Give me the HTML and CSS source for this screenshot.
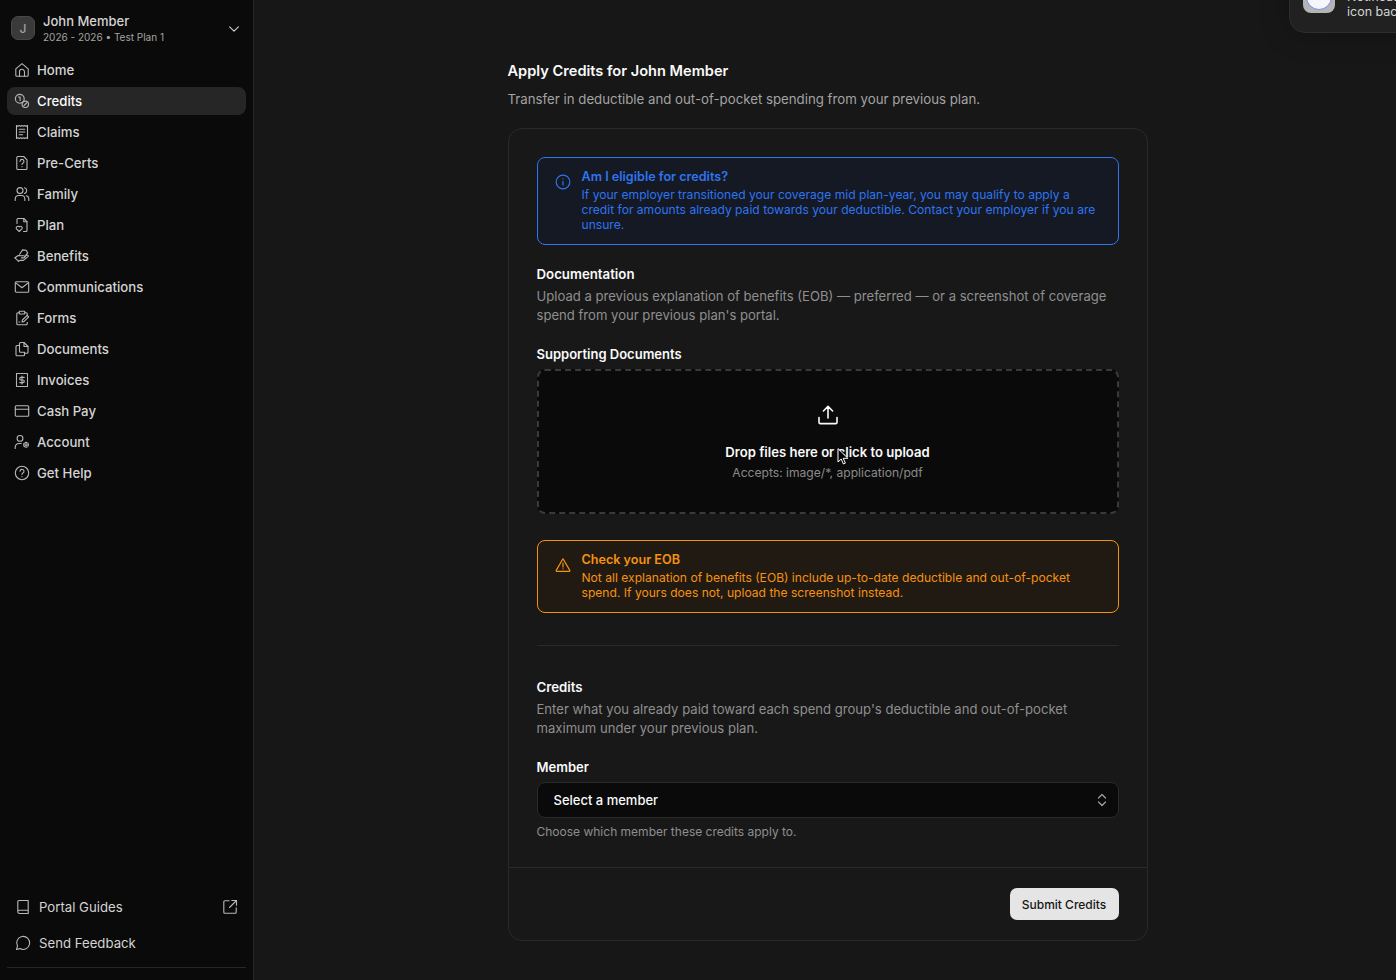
FILE: index.html
```html
<!DOCTYPE html>
<html lang="en">

<head>
    <meta charset="UTF-8">
    <meta name="viewport" content="width=device-width, initial-scale=1.0">
    <link rel="stylesheet" href="styles.css">
    <title>Apply Credits</title>
</head>

<body>
    <aside class="sidebar">
        <div class="member">
            <div class="avatar">J</div>
            <div class="memberText">
                <div class="memberName">John Member</div>
                <div class="memberPlan">2026 - 2026 • Test Plan 1</div>
            </div>
            <svg class="chev" viewBox="0 0 16 16"><path d="M3 5.500l5 5 5-5"/></svg>
        </div>

        <nav class="nav">
            <a class="navItem"><svg viewBox="0 0 16 16"><path d="M1.800 6.800L8 1.700l6.200 5.100v6.400a1 1 0 0 1-1 1H2.800a1 1 0 0 1-1-1z"/><path d="M5.500 14.200V9.800a2.500 2.500 0 0 1 5 0v4.400"/></svg>Home</a>
            <a class="navItem active"><svg viewBox="0 0 16 16"><circle cx="5.800" cy="5.800" r="4.400"/><circle cx="11.300" cy="11.300" r="3.200"/><path d="M4.600 4h1.500v3.400M10 12.600l2.600-2.600"/></svg>Credits</a>
            <a class="navItem"><svg viewBox="0 0 16 16"><path d="M2.500 1.500l1.400.8 1.400-.8 1.300.8 1.400-.8 1.400.8 1.300-.8 1.400.8 1.400-.8v13l-1.400-.8-1.400.8-1.300-.8-1.400.8-1.400-.8-1.300.8-1.400-.8-1.400.8z"/><path d="M5.200 5.200h5.600M5.200 8h5.600M5.200 10.800h3.400"/></svg>Claims</a>
            <a class="navItem"><svg viewBox="0 0 16 16"><path d="M3.800 1.500h5.900l3.300 3.300v8.700a1 1 0 0 1-1 1H3.800a1 1 0 0 1-1-1v-11a1 1 0 0 1 1-1z"/><path d="M6 6.400a2 2 0 1 1 2.800 1.800c-.5.300-.8.600-.8 1.200M8 11.600v.1"/></svg>Pre-Certs</a>
            <a class="navItem"><svg viewBox="0 0 16 16"><circle cx="6" cy="4.600" r="3"/><path d="M1.200 14.500v-1.700a3.300 3.300 0 0 1 3.300-3.300h3a3.300 3.300 0 0 1 3.300 3.300v1.700"/><path d="M10.500 1.700a3 3 0 0 1 0 5.800M12.300 9.700a3.300 3.300 0 0 1 2.500 3.100v1.700"/></svg>Family</a>
            <a class="navItem"><svg viewBox="0 0 16 16"><path d="M3 6.500V2.500a1 1 0 0 1 1-1h5.800l3.200 3.200v8.800a1 1 0 0 1-1 1H9.500"/><path d="M9.800 1.500v3.200H13"/><path d="M5.200 14.500l-2.700-2.600a1.600 1.600 0 0 1 2.700-1.900 1.600 1.600 0 0 1 2.700 1.900z"/></svg>Plan</a>
            <a class="navItem"><svg viewBox="0 0 16 16"><path d="M1 9.800l3.200-2.300 3.600.2h2.100a1 1 0 0 1 0 2.200H7.400"/><path d="M4.400 13.200l1.400-.8h3.600l4.600-3.800a1 1 0 0 0-1.400-1.400l-2.200 1.700"/><path d="M1 9.800l3.400 3.400"/><path d="M5.600 6.300l3-4.400 3.600.3 1.500 2.700-1.800 2.300"/></svg>Benefits</a>
            <a class="navItem"><svg viewBox="0 0 16 16"><rect x="1.300" y="2.800" width="13.400" height="10.400" rx="1"/><path d="M1.500 3.600L8 8.800l6.500-5.200"/></svg>Communications</a>
            <a class="navItem"><svg viewBox="0 0 16 16"><path d="M10.800 2.800h1.400a1 1 0 0 1 1 1v1.400M5.200 2.800H3.800a1 1 0 0 0-1 1v10a1 1 0 0 0 1 1h8.400a1 1 0 0 0 1-1v-1.500"/><rect x="5.200" y="1.200" width="5.600" height="2.800" rx=".6"/><path d="M8 12l.4-2 4.800-4.600 1.500 1.500-4.800 4.700zM5 12h.8"/></svg>Forms</a>
            <a class="navItem"><svg viewBox="0 0 16 16"><path d="M5.500 4.500V2.500a1 1 0 0 1 1-1H10l4 4v5.800a1 1 0 0 1-1 1h-2.500"/><path d="M10 1.500v4h4"/><path d="M5.500 4.500H3a1 1 0 0 0-1 1v8.200a1 1 0 0 0 1 1h6.500a1 1 0 0 0 1-1v-2.400h-4a1 1 0 0 1-1-1z"/></svg>Documents</a>
            <a class="navItem"><svg viewBox="0 0 16 16"><path d="M2.500 1.500h11v13h-11z" stroke-dasharray="1.600 .7"/><path d="M10.200 5.400H7a1.300 1.300 0 0 0 0 2.600h2a1.300 1.300 0 0 1 0 2.600H5.800M8 4v8"/></svg>Invoices</a>
            <a class="navItem"><svg viewBox="0 0 16 16"><rect x="1.300" y="2.800" width="13.400" height="10.400" rx="1"/><path d="M1.300 6.200h13.400"/></svg>Cash Pay</a>
            <a class="navItem"><svg viewBox="0 0 16 16"><circle cx="6" cy="4.400" r="2.900"/><path d="M1.200 14.500v-1.500a3.500 3.500 0 0 1 3.500-3.500h2.500"/><circle cx="12" cy="10.800" r="1.100"/><circle cx="12" cy="10.800" r="2.400" stroke-dasharray="1.400 1"/></svg>Account</a>
            <a class="navItem"><svg viewBox="0 0 16 16"><circle cx="8" cy="8" r="6.700"/><path d="M6 6.300a2 2 0 1 1 2.900 1.800c-.6.300-.9.700-.9 1.300M8 11.600v.1"/></svg>Get Help</a>
        </nav>

        <div class="sideFoot">
            <a class="footItem"><svg viewBox="0 0 16 16"><path d="M2.800 12.800V2.500a1 1 0 0 1 1-1h9.400v13H4.400a1.600 1.600 0 0 1-1.600-1.700 1.600 1.600 0 0 1 1.600-1.600h8.800"/></svg>Portal Guides<svg class="extIcon" viewBox="0 0 16 16"><path d="M14.200 8.800v4.400a1 1 0 0 1-1 1H2.800a1 1 0 0 1-1-1V2.800a1 1 0 0 1 1-1h4.400M9.800 1.500h4.700v4.700M14.500 1.500L7.500 8.500"/></svg></a>
            <a class="footItem"><svg viewBox="0 0 16 16"><path d="M1.500 14.500l1-3.400a6.500 6.500 0 1 1 2.500 2.500z"/></svg>Send Feedback</a>
            <div class="footLine"></div>
        </div>
    </aside>

    <main class="main">
        <div class="content">
            <h1 class="pageTitle">Apply Credits for John Member</h1>
            <p class="pageSub">Transfer in deductible and out-of-pocket spending from your previous plan.</p>

            <section class="card">
                <div class="cardBody">
                    <div class="alert alertBlue">
                        <svg class="alertIcon" viewBox="0 0 16 16"><circle cx="8" cy="8" r="6.800"/><path d="M8 7.400V11M8 4.800v.1"/></svg>
                        <div>
                            <div class="alertTitle">Am I eligible for credits?</div>
                            <div class="alertText">If your employer transitioned your coverage mid plan-year, you may qualify to apply a credit for amounts already paid towards your deductible. Contact your employer if you are unsure.</div>
                        </div>
                    </div>

                    <h2 class="secTitle docTitle">Documentation</h2>
                    <p class="secText">Upload a previous explanation of benefits (EOB) — preferred — or a screenshot of coverage spend from your previous plan's portal.</p>

                    <div class="fieldLabel supLabel">Supporting Documents</div>
                    <div class="dropzone">
                        <svg class="upIcon" viewBox="0 0 20 20"><path d="M10 13V1.600M5.400 6L10 1.400 14.600 6M1 12.500v4.700a1.400 1.400 0 0 0 1.400 1.400h15.200a1.400 1.400 0 0 0 1.400-1.400v-4.700"/></svg>
                        <div class="dropTitle">Drop files here or click to upload</div>
                        <div class="dropSub">Accepts: image/*, application/pdf</div>
                        <svg class="cursor" viewBox="0 0 12 18"><path d="M1 1v13l3.200-3 2.200 5 2-.9-2.200-4.800H10.500z"/></svg>
                    </div>

                    <div class="alert alertOrange">
                        <svg class="alertIcon" viewBox="0 0 16 16"><path d="M8 1.800l6.800 11.600a.6.6 0 0 1-.5.9H1.700a.6.6 0 0 1-.5-.9z"/><path d="M8 6v4M8 11.800v.1"/></svg>
                        <div>
                            <div class="alertTitle">Check your EOB</div>
                            <div class="alertText">Not all explanation of benefits (EOB) include up-to-date deductible and out-of-pocket spend. If yours does not, upload the screenshot instead.</div>
                        </div>
                    </div>

                    <hr class="divider">

                    <h2 class="secTitle">Credits</h2>
                    <p class="secText">Enter what you already paid toward each spend group's deductible and out-of-pocket maximum under your previous plan.</p>

                    <div class="fieldLabel memLabel">Member</div>
                    <div class="select">
                        <span>Select a member</span>
                        <svg viewBox="0 0 12 16"><path d="M2.500 6L6 2.500 9.500 6M2.500 10L6 13.500 9.500 10"/></svg>
                    </div>
                    <p class="helpText">Choose which member these credits apply to.</p>
                </div>
                <div class="cardFoot">
                    <button class="submitB">Submit Credits</button>
                </div>
            </section>
        </div>
    </main>

    <!-- notification toast, cut off by the window edge -->
    <div class="toast">
        <div class="toastIcon"><div class="toastDisc"></div></div>
        <div class="toastText">Notifications<br>icon back</div>
    </div>
</body>

</html>
```

FILE: styles.css
```css
* {
    box-sizing: border-box;
}

html,
body {
    height: 100%;
}

body {
    margin: 0;
    display: flex;
    height: 980px;
    overflow: hidden;
    background-color: #171717;
    color: #fafafa;
    font-family: Inter, "Noto Sans", sans-serif;
}

svg {
    fill: none;
    stroke: currentColor;
    stroke-width: 1.2;
    stroke-linecap: round;
    stroke-linejoin: round;
}

/* sidebar */

.sidebar {
    width: 254px;
    flex-shrink: 0;
    display: flex;
    flex-direction: column;
    padding: 0 7px 12px;
    background-color: #0a0a0a;
    border-right: 1px solid #262626;
}

.member {
    display: flex;
    align-items: center;
    height: 54px;
    margin-top: 2px;
    padding: 0 4px;
}

.avatar {
    width: 24px;
    height: 24px;
    display: flex;
    align-items: center;
    justify-content: center;
    margin-right: 8px;
    margin-top: -2px;
    border: 1px solid #484848;
    border-radius: 7px;
    background-color: #3a3a3a;
    color: #a3a3a3;
    font-size: 12px;
    font-weight: 500;
}

.memberText {
    flex: 1;
}

.memberName {
    font-size: 13px;
    line-height: 16px;
    font-weight: 500;
    color: #d4d4d4;
}

.memberPlan {
    font-size: 10px;
    line-height: 16px;
    color: #a3a3a3;
}

.chev {
    width: 14px;
    height: 14px;
    margin-right: 1px;
    color: #d4d4d4;
}

.nav {
    display: flex;
    flex-direction: column;
    gap: 3px;
}

.navItem {
    display: flex;
    align-items: center;
    gap: 7px;
    height: 28px;
    padding-left: 7px;
    border-radius: 8px;
    font-size: 13.2px;
    font-weight: 500;
    color: #d4d4d4;
}

.navItem svg {
    width: 16px;
    height: 16px;
    flex-shrink: 0;
    color: #b8b8b8;
    stroke-width: 1.1;
}

.active {
    background-color: #262626;
    color: #fafafa;
}

.sideFoot {
    margin-top: auto;
}

.footItem {
    display: flex;
    align-items: center;
    gap: 8px;
    height: 36px;
    padding-left: 8px;
    font-size: 13.2px;
    color: #d4d4d4;
}

.footItem svg {
    width: 16px;
    height: 16px;
    color: #b8b8b8;
    stroke-width: 1.1;
}

.footItem .extIcon {
    margin-left: auto;
    margin-right: 8px;
}

.footLine {
    height: 1px;
    margin-top: 6px;
    background-color: #262626;
}

/* main column */

.main {
    flex: 1;
    display: flex;
    justify-content: center;
    padding-top: 62px;
}

.content {
    width: 640px;
    margin-left: 5px;
}

.pageTitle {
    margin: 0;
    font-size: 14.6px;
    line-height: 18px;
    font-weight: 600;
}

.pageSub {
    margin: 10px 0 0;
    font-size: 13.25px;
    line-height: 19px;
    color: #a3a3a3;
}

.card {
    margin-top: 19px;
    border: 1px solid #2a2a2a;
    border-radius: 14px;
    background-color: #181818;
}

.cardBody {
    padding: 28px 28px 26px;
}

.alert {
    display: flex;
    gap: 11px;
    padding: 10px 14px 12px 17px;
    border: 1px solid;
    border-radius: 8px;
}

.alertIcon {
    width: 16px;
    height: 16px;
    flex-shrink: 0;
    margin-top: 6px;
}

.alertTitle {
    font-size: 12.6px;
    line-height: 18px;
    font-weight: 600;
}

.alertText {
    font-size: 12.1px;
    line-height: 15px;
    margin-top: 1px;
}

.alertBlue {
    background-color: #141923;
    border-color: #2f74f0;
    color: #2f74f0;
}

.alertOrange {
    margin-top: 26px;
    background-color: #211a13;
    border-color: #f5920f;
    color: #f5920f;
}

.secTitle {
    margin: 0;
    font-size: 13.25px;
    line-height: 18px;
    font-weight: 600;
}

.docTitle {
    margin-top: 20px;
}

.secText {
    margin: 4px 0 0;
    font-size: 13.1px;
    line-height: 19px;
    color: #8f8f8f;
}

.fieldLabel {
    font-size: 13px;
    line-height: 16px;
    font-weight: 600;
}

.supLabel {
    margin-top: 21px;
}

.memLabel {
    margin-top: 21px;
}

.dropzone {
    position: relative;
    height: 145px;
    margin-top: 7px;
    display: flex;
    flex-direction: column;
    align-items: center;
    padding-top: 34px;
    border: 2px dashed #3a3a3a;
    border-radius: 8px;
    background-color: #0a0a0a;
}

.upIcon {
    width: 20px;
    height: 20px;
    stroke-width: 1.6;
}

.dropTitle {
    margin-top: 18px;
    font-size: 13.1px;
    line-height: 18px;
    font-weight: 600;
}

.dropSub {
    margin-top: 3px;
    font-size: 12.1px;
    line-height: 18px;
    color: #8a8a8a;
}

/* mouse pointer caught in the screenshot */
.cursor {
    position: absolute;
    left: 298px;
    top: 77px;
    width: 12px;
    height: 18px;
    fill: #000;
    color: #fff;
    stroke-width: 1;
}

.divider {
    height: 1px;
    margin: 32px 0 32px;
    border: 0;
    background-color: #2a2a2a;
}

.select {
    display: flex;
    align-items: center;
    justify-content: space-between;
    height: 36px;
    margin-top: 7px;
    padding: 0 10px 0 16px;
    border: 1px solid #2a2a2a;
    border-radius: 8px;
    background-color: #0a0a0a;
    font-size: 13px;
    font-weight: 500;
}

.select svg {
    width: 12px;
    height: 16px;
    color: #a3a3a3;
}

.helpText {
    margin: 5px 0 0;
    font-size: 12px;
    line-height: 18px;
    color: #8f8f8f;
}

.cardFoot {
    display: flex;
    justify-content: flex-end;
    padding: 20px 28px 20px;
    border-top: 1px solid #2a2a2a;
}

.submitB {
    height: 32px;
    width: 109px;
    border: 0;
    border-radius: 7px;
    background-color: #e5e5e5;
    color: #171717;
    font-family: Inter, sans-serif;
    font-size: 12px;
    font-weight: 500;
}

/* toast */

.toast {
    position: absolute;
    top: -30px;
    left: 1289px;
    width: 200px;
    height: 63px;
    display: flex;
    gap: 12px;
    padding: 10px 13px;
    border: 1px solid #2e2e2e;
    border-radius: 16px;
    background-color: #212121;
    box-shadow: 0 0 30px rgba(0, 0, 0, 0.25);
}

.toastIcon {
    width: 32px;
    height: 32px;
    display: flex;
    align-items: center;
    justify-content: center;
    flex-shrink: 0;
    border-radius: 8px;
    background-color: #b5b5b5;
}

.toastDisc {
    width: 26px;
    height: 26px;
    border: 1px solid #7c8cf0;
    border-radius: 50%;
    background-color: #f5f6fa;
}

.toastText {
    margin-top: 8px;
    font-size: 12.5px;
    line-height: 15px;
    color: #d4d4d4;
}
```
